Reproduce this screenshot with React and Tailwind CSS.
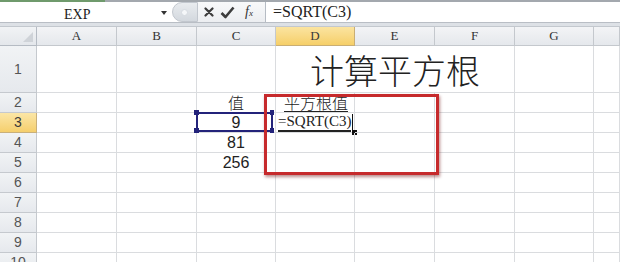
import React from "react";

const colW = "grid-cols-[37px_80px_80px_79px_79px_80px_80px_79px_1fr]";
const letters = ["A", "B", "C", "D", "E", "F", "G", ""];
const line = "border-r border-b border-[#dadcdf]";

function RowHead({ n, active }) {
    return (
        <div
            className={`flex items-center justify-center border-r border-b text-[14px] font-['Liberation_Sans',sans-serif] ${
                active
                    ? "bg-gradient-to-b from-[#fbe6a6] to-[#f5cf6c] border-[#c9b07a] text-[#3a3a3a]"
                    : "bg-gradient-to-b from-[#f1f3f5] to-[#e6e9ed] border-[#c5c9ce] text-[#555]"
            }`}
        >
            {n}
        </div>
    );
}

function Cell({ children, className = "" }) {
    return <div className={`${line} relative ${className}`}>{children}</div>;
}

function App() {
    const rest = [6, 7, 8, 9, 10];

    return (
        <div className="w-[620px] h-[262px] overflow-hidden bg-white relative select-none">
            {/* top strip */}
            <div className="h-[2px] flex">
                <div className="w-[105px] bg-[#6f9a6c]" />
                <div className="flex-1 bg-[#a3a8ae]" />
            </div>

            {/* formula bar */}
            <div className="h-[21px] flex items-stretch bg-white border-b border-[#b9bec5]">
                <div className="w-[172px] relative flex items-center">
                    <span className="absolute left-[64px] top-[2px] text-[14px] text-[#222] font-['Liberation_Serif',serif]">
                        EXP
                    </span>
                    <span className="absolute left-[161px] top-[9px] w-0 h-0 border-l-[3.5px] border-r-[3.5px] border-t-[4px] border-l-transparent border-r-transparent border-t-[#333]" />
                </div>
                <div className="w-[26px] rounded-l-full bg-gradient-to-b from-[#e9ecef] to-[#d3d8de] border border-[#c2c7ce] flex items-center pl-[8px]">
                    <span className="w-[7px] h-[7px] rounded-full bg-[#f5f7f9] border border-[#d5dae0]" />
                </div>
                <div className="w-[68px] bg-gradient-to-b from-[#f8f9fa] to-[#eceef1] border-r border-[#b6bcc4] flex items-center gap-[6px] pl-[6px]">
                    <svg width="10" height="10" viewBox="0 0 10 10">
                        <path d="M1.5 1.5 L8.5 8.5 M8.5 1.5 L1.5 8.5" stroke="#3d3d3d" strokeWidth="2.2" strokeLinecap="round" />
                    </svg>
                    <svg width="15" height="13" viewBox="0 0 15 13">
                        <path d="M1.5 7 L5.5 11 L13.5 1.5" fill="none" stroke="#3d3d3d" strokeWidth="2.6" strokeLinejoin="round" />
                    </svg>
                    <span className="ml-[4px] text-[14px] italic text-[#333] font-['Liberation_Serif',serif] leading-none">
                        f<span className="text-[9px]">x</span>
                    </span>
                </div>
                <div className="flex-1 flex items-center pl-[7px] text-[16px] text-[#222] font-['Liberation_Serif',serif]">
                    =SQRT(C3)
                </div>
            </div>
            <div className="h-[4px] bg-[#dde1e6] border-b border-[#c3c8ce]" />

            {/* grid */}
            <div className={`grid ${colW} grid-rows-[19px_47px_repeat(9,20px)] relative`}>
                {/* header row */}
                <div className="relative bg-gradient-to-b from-[#f1f3f5] to-[#e4e7eb] border-r border-b border-[#b5bbc3]">
                    <span className="absolute right-[4px] bottom-[3px] w-0 h-0 border-l-[9px] border-t-[9px] border-l-transparent border-t-transparent border-b-0 border-r-0 border-[#c7ccd2] [border-bottom-width:0]" />
                    <svg className="absolute right-[3px] bottom-[3px]" width="10" height="10" viewBox="0 0 10 10">
                        <path d="M10 0 L10 10 L0 10 Z" fill="#cfd3d8" />
                    </svg>
                </div>
                {letters.map((l, i) => (
                    <div
                        key={i}
                        className={`flex items-center justify-center border-r border-b text-[13px] font-['Liberation_Serif',serif] ${
                            l === "D"
                                ? "bg-gradient-to-b from-[#fbe4a0] to-[#f6cf68] border-[#c9ae74] text-[#3a3a3a]"
                                : "bg-gradient-to-b from-[#f3f4f6] to-[#e5e8ec] border-[#c4c8cd] text-[#333]"
                        }`}
                    >
                        {l}
                    </div>
                ))}

                {/* row 1 */}
                <RowHead n={1} />
                <Cell />
                <Cell />
                <Cell />
                <div className={`${line} col-span-3 flex items-end justify-center pb-[2px]`}>
                    <span className="text-[34px] leading-[40px] text-[#222] font-['Noto_Sans_CJK_SC',sans-serif] font-light">
                        计算平方根
                    </span>
                </div>
                <Cell />
                <Cell />

                {/* row 2 */}
                <RowHead n={2} />
                <Cell />
                <Cell />
                <Cell className="flex items-end justify-center">
                    <span className="text-[16px] leading-[19px] text-[#222] font-['Noto_Sans_CJK_SC',sans-serif] font-light">值</span>
                </Cell>
                <Cell className="flex items-end pl-[8px]">
                    <span className="text-[16px] leading-[18px] text-[#222] border-b border-[#222] font-['Noto_Sans_CJK_SC',sans-serif] font-light">
                        平方根值
                    </span>
                </Cell>
                <Cell />
                <Cell />
                <Cell />
                <Cell />

                {/* row 3 */}
                <RowHead n={3} active />
                <Cell />
                <Cell />
                <Cell className="flex items-end justify-center">
                    <span className="text-[16px] leading-[19px] text-[#222] font-['Liberation_Sans',sans-serif]">9</span>
                    <div className="absolute left-[-1px] top-[-1px] w-[77px] h-[20px] border-2 border-[#23237a]" />
                    <span className="absolute left-[-3px] top-[-3px] w-[5px] h-[5px] bg-[#23237a]" />
                    <span className="absolute left-[-3px] top-[15px] w-[5px] h-[5px] bg-[#23237a]" />
                    <span className="absolute left-[73px] top-[-3px] w-[4px] h-[5px] bg-[#23237a]" />
                    <span className="absolute left-[73px] top-[15px] w-[4px] h-[5px] bg-[#23237a]" />
                </Cell>
                <Cell className="flex items-end pl-[2px]">
                    <span className="text-[15px] leading-[18px] text-[#222] border-b-2 border-[#222] font-['Liberation_Serif',serif]">
                        =SQRT(C3)
                    </span>
                    <span className="ml-[1px] mb-[1px] w-px h-[17px] bg-[#111]" />
                    <span className="absolute right-[-3px] bottom-[-3px] w-[5px] h-[5px] bg-[#111]" />
                </Cell>
                <Cell />
                <Cell />
                <Cell />
                <Cell />

                {/* rows 4-5 */}
                {[
                    [4, "81"],
                    [5, "256"],
                ].map(([n, v]) => (
                    <React.Fragment key={n}>
                        <RowHead n={n} />
                        <Cell />
                        <Cell />
                        <Cell className="flex items-end justify-center">
                            <span className="text-[16px] leading-[19px] text-[#222] font-['Liberation_Sans',sans-serif]">{v}</span>
                        </Cell>
                        <Cell />
                        <Cell />
                        <Cell />
                        <Cell />
                        <Cell />
                    </React.Fragment>
                ))}

                {rest.map((n) => (
                    <React.Fragment key={n}>
                        <RowHead n={n} />
                        {letters.map((l, i) => (
                            <Cell key={i} />
                        ))}
                    </React.Fragment>
                ))}

                {/* red highlight box */}
                <div className="absolute left-[264px] top-[67px] w-[175px] h-[81px] border-[3px] border-[#c62a2c] shadow-[1px_2px_3px_rgba(100,0,0,0.45)]" />
            </div>
        </div>
    );
}

export default App;
